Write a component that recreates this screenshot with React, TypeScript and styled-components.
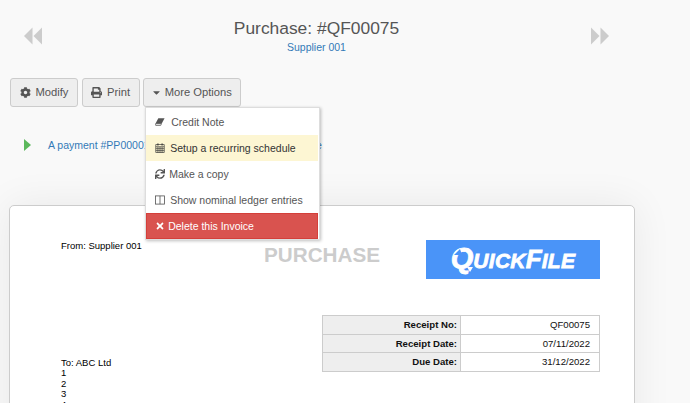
import React from "react";
import styled, { createGlobalStyle } from "styled-components";
import { FaCaretDown, FaCog, FaPrint, FaSync, FaTimes } from "react-icons/fa";

const GlobalStyle = createGlobalStyle`
	html, body {
		margin: 0;
		padding: 0;
		height: 403px;
		overflow: hidden;
		background: #f9f9f9;
		font-family: "Liberation Sans", Arial, sans-serif;
	}
`;

const EraserIcon = () => (
	<svg viewBox="0 0 12 10" fill="currentColor">
		<path d="M4 0.5h7.5L8 7H0.5z" />
		<path d="M0.5 7.2h7.2l-0.9 2H0.9z" fill="none" stroke="currentColor" strokeWidth="0.8" />
	</svg>
);

const CalendarIcon = () => (
	<svg viewBox="0 0 11 12" fill="none" stroke="currentColor" strokeWidth="0.8">
		<rect x="0.5" y="2" width="10" height="9.5" />
		<path d="M0.5 4.5h10M0.5 6.8h10M0.5 9.1h10M3 4.5v7M5.5 4.5v7M8 4.5v7" />
		<path d="M3 0.5v2.5M8 0.5v2.5" strokeWidth="1.4" />
	</svg>
);

const ColumnsIcon = () => (
	<svg viewBox="0 0 11 10" fill="none" stroke="currentColor" strokeWidth="0.9">
		<rect x="0.5" y="0.5" width="10" height="9" />
		<path d="M5.5 0.5v9" />
	</svg>
);

const menuItems = [
	{ label: "Credit Note", icon: <EraserIcon />, gap: 6, tone: "plain" },
	{ label: "Setup a recurring schedule", icon: <CalendarIcon />, gap: 5, tone: "active" },
	{ label: "Make a copy", icon: <FaSync />, gap: 4, tone: "plain" },
	{ label: "Show nominal ledger entries", icon: <ColumnsIcon />, gap: 5, tone: "plain" },
	{ label: "Delete this Invoice", icon: <FaTimes />, gap: 3, tone: "danger" },
];

const receiptRows = [
	{ label: "Receipt No:", value: "QF00075" },
	{ label: "Receipt Date:", value: "07/11/2022" },
	{ label: "Due Date:", value: "31/12/2022" },
];

export default function App() {
	return (
		<Page>
			<GlobalStyle />
			<Header>
				<NavArrow viewBox="0 0 18 18">
					<polygon points="0,9 8.5,0.5 8.5,17.5" />
					<polygon points="9.5,9 18,0.5 18,17.5" />
				</NavArrow>
				<TitleBlock>
					<Title>Purchase: #QF00075</Title>
					<SubLink>Supplier 001</SubLink>
				</TitleBlock>
				<NavArrow viewBox="0 0 18 18">
					<polygon points="18,9 9.5,0.5 9.5,17.5" />
					<polygon points="8.5,9 0,0.5 0,17.5" />
				</NavArrow>
			</Header>

			<Toolbar>
				<ToolButton><FaCog /> Modify</ToolButton>
				<ToolButton><FaPrint /> Print</ToolButton>
				<MenuAnchor>
					<ToolButton $caret><FaCaretDown /> More Options</ToolButton>
					<Menu>
						{menuItems.map((item) => (
							<MenuItem key={item.label} $tone={item.tone} $gap={item.gap}>
								{item.icon}
								<span>{item.label}</span>
							</MenuItem>
						))}
					</Menu>
				</MenuAnchor>
			</Toolbar>

			<Notice>
				<NoticeMark viewBox="0 0 7 12">
					<polygon points="0,0 7,6 0,12" />
				</NoticeMark>
				<NoticeLink>A payment #PP00001 has been logged against this invoice</NoticeLink>
			</Notice>

			<Card>
				<TopRow>
					<Address>From: Supplier 001</Address>
					<DocTitle>PURCHASE</DocTitle>
					<Logo>
						<LogoQ>
							Q
							<LogoSwoosh viewBox="0 0 28 26">
								<path d="M3 8 L9 2 L11 8 Z" fill="#4a94f8" />
								<path d="M16 20 L22 20 L19 25 Z" fill="#fff" />
							</LogoSwoosh>
						</LogoQ>
						<LogoSmall>UICK</LogoSmall>
						<LogoCap>F</LogoCap>
						<LogoSmall>ILE</LogoSmall>
					</Logo>
				</TopRow>
				<BottomRow>
					<ToBlock>
						<div>To: ABC Ltd</div>
						<div>1</div>
						<div>2</div>
						<div>3</div>
						<div>4</div>
					</ToBlock>
					<ReceiptTable>
						<tbody>
							{receiptRows.map((row) => (
								<tr key={row.label}>
									<LabelCell>{row.label}</LabelCell>
									<ValueCell>{row.value}</ValueCell>
								</tr>
							))}
						</tbody>
					</ReceiptTable>
				</BottomRow>
			</Card>
		</Page>
	);
}

const Page = styled.div`
	width: 690px;
	height: 403px;
	overflow: hidden;
	background: #f9f9f9;
`;

const Header = styled.div`
	box-sizing: border-box;
	display: flex;
	justify-content: space-between;
	align-items: flex-start;
	width: 609px;
	height: 78px;
	padding: 18px 0 0 24px;
`;

const NavArrow = styled.svg`
	width: 18px;
	height: 18px;
	margin-top: 9px;
	fill: #ccc;
`;

const TitleBlock = styled.div`
	text-align: center;
`;

const Title = styled.div`
	font-size: 17.4px;
	line-height: 21px;
	color: #555;
`;

const SubLink = styled.div`
	margin-top: 2px;
	font-size: 10.5px;
	line-height: 12px;
	color: #337ab7;
`;

const Toolbar = styled.div`
	display: flex;
	gap: 3.6px;
	padding-left: 10px;
`;

const ToolButton = styled.div<{ $caret?: boolean }>`
	display: flex;
	align-items: center;
	gap: 5px;
	box-sizing: border-box;
	height: 29px;
	padding: 0 8.5px 2px 8.5px;
	border: 1px solid #ccc;
	border-radius: 3px;
	background: #eee;
	font-size: 11.2px;
	color: #555;

	svg {
		width: ${({ $caret }) => ($caret ? 7 : 11)}px;
		height: 11px;
		margin-top: 2px;
	}
`;

const MenuAnchor = styled.div`
	position: relative;
`;

const Menu = styled.div`
	position: absolute;
	top: 29px;
	left: 2px;
	z-index: 2;
	box-sizing: border-box;
	width: 175px;
	height: 133px;
	padding: 1px 1px 0 0;
	background: #fff;
	border: 1px solid #ddd;
	box-shadow: 1px 1px 3px rgba(0, 0, 0, 0.25);
`;

const toneBackground: Record<string, string> = {
	plain: "transparent",
	active: "#fdf6d3",
	danger: "#d9534f",
};

const toneColor: Record<string, string> = {
	plain: "#555",
	active: "#333",
	danger: "#fff",
};

const MenuItem = styled.div<{ $tone: string; $gap: number }>`
	display: flex;
	align-items: center;
	gap: ${({ $gap }) => $gap}px;
	height: 26px;
	box-sizing: border-box;
	padding-left: 9px;
	font-size: 10.5px;
	background: ${({ $tone }) => toneBackground[$tone]};
	color: ${({ $tone }) => toneColor[$tone]};
	${({ $tone }) => ($tone === "danger" ? "border: 1px solid #d43f3a; padding-left: 8px;" : "")}

	svg {
		width: 10px;
		height: 10px;
		flex-shrink: 0;
	}
`;

const Notice = styled.div`
	display: flex;
	align-items: center;
	height: 20px;
	margin-top: 28px;
	padding-left: 24px;
`;

const NoticeMark = styled.svg`
	width: 7px;
	height: 12px;
	margin-right: 17px;
	fill: #5cb85c;
`;

const NoticeLink = styled.div`
	font-size: 10.5px;
	color: #337ab7;
	white-space: nowrap;
`;

const Card = styled.div`
	box-sizing: border-box;
	width: 626px;
	height: 260px;
	margin: 50px 0 0 9px;
	padding: 34px 34px 0 51px;
	background: #fff;
	border: 1px solid #ccc;
	border-radius: 5px;
	box-shadow: 0 0 40px rgba(0, 0, 0, 0.07);
`;

const TopRow = styled.div`
	display: flex;
	align-items: flex-start;
	height: 75px;
`;

const Address = styled.div`
	width: 203px;
	font-size: 9.5px;
	line-height: 11px;
	color: #000;
`;

const DocTitle = styled.div`
	width: 162px;
	margin-top: 3px;
	font-size: 20.7px;
	line-height: 23px;
	font-weight: bold;
	color: #ccc;
`;

const Logo = styled.div`
	display: flex;
	align-items: baseline;
	justify-content: center;
	width: 174px;
	height: 39px;
	line-height: 37px;
	background: #4a94f8;
	color: #fff;
	font-weight: bold;
	font-style: italic;
	-webkit-text-stroke: 0.8px #fff;
`;

const LogoQ = styled.span`
	position: relative;
	font-size: 29px;
`;

const LogoSwoosh = styled.svg`
	position: absolute;
	left: 0;
	top: 7px;
	width: 28px;
	height: 26px;
`;

const LogoSmall = styled.span`
	font-size: 21px;
	letter-spacing: 0.3px;
`;

const LogoCap = styled.span`
	font-size: 26px;
`;

const BottomRow = styled.div`
	display: flex;
	align-items: flex-start;
	justify-content: space-between;
`;

const ToBlock = styled.div`
	margin-top: 43px;
	font-size: 9.5px;
	line-height: 10.4px;
	color: #000;
`;

const ReceiptTable = styled.table`
	width: 278px;
	table-layout: fixed;
	border-collapse: collapse;
	font-size: 9.6px;
	color: #111;
`;

const LabelCell = styled.td`
	width: 138px;
	height: 17.5px;
	padding: 0 3px 0 0;
	box-sizing: border-box;
	border: 1px solid #ccc;
	background: #eee;
	text-align: right;
	font-weight: bold;
`;

const ValueCell = styled.td`
	height: 17.5px;
	padding: 0 9px 0 0;
	border: 1px solid #ccc;
	text-align: right;
`;
